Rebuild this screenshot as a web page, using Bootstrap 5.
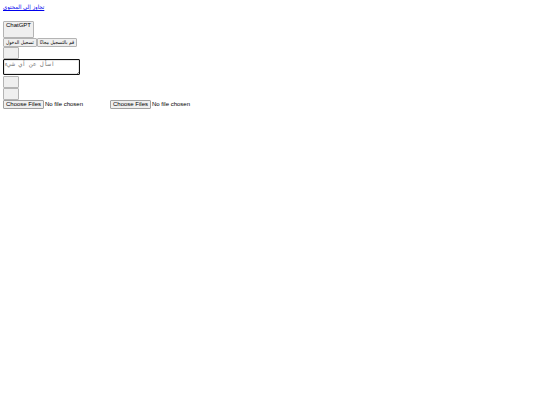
<!DOCTYPE html>
<html lang="ar" dir="ltr">
<head>
<meta charset="utf-8">
<meta name="viewport" content="width=device-width, initial-scale=1">
<title>ChatGPT</title>
<link href="https://cdn.jsdelivr.net/npm/bootstrap@5.3.0/dist/css/bootstrap.min.css" rel="stylesheet">
<style>
  body { font-family: "Liberation Sans", "DejaVu Sans", sans-serif; font-size: 6px; line-height: 7px; color: #000; background: #fff; padding: 3px; }
  .skip-link { color: #0000ee; font-family: "DejaVu Sans Condensed", "DejaVu Sans", sans-serif; line-height: 8px; margin-bottom: 10px; }
  .plain-btn { background: #efefef; color: #000; border: 1px solid #b4b4b4; border-radius: 1px; padding: 0 2px; font-size: 6px; line-height: 7px; }
  .auth-btn { font-family: "DejaVu Sans Condensed", "DejaVu Sans", sans-serif; font-size: 5px; }
  .model-btn { height: 17px; padding-bottom: 8px; }
  .icon-btn { width: 16px; height: 12px; }
  .prompt-box { width: 77px; height: 16px; margin-bottom: 1px; padding: 0; border: 1px solid #101010; box-shadow: inset 0 0 1px #101010; outline: none; border-radius: 1px; font-family: "DejaVu Sans Mono", monospace; font-size: 6px; line-height: 8px; resize: none; color: #000; background: linear-gradient(135deg, transparent 50%, #999 50%, #999 70%, transparent 70%) right bottom / 3px 3px no-repeat; }
  .prompt-box::placeholder { color: #757575; }
  .file-field { width: 107px; font-size: 6px; line-height: 7px; }
  .file-field::file-selector-button { background: #efefef; color: #000; border: 1px solid #a0a0a0; border-radius: 1px; padding: 0 2px; margin-right: 1px; font-size: 6px; line-height: 7px; }
</style>
</head>
<body>
<a class="skip-link d-block text-decoration-underline" href="#main">تجاوز إلى المحتوى</a>
<main id="main" class="d-flex flex-column align-items-start">
  <button type="button" class="plain-btn model-btn">ChatGPT</button>
  <div class="d-flex">
    <button type="button" class="plain-btn auth-btn">تسجيل الدخول</button>
    <button type="button" class="plain-btn auth-btn">قم بالتسجيل مجانًا</button>
  </div>
  <button type="button" class="plain-btn icon-btn" aria-label="إضافة"></button>
  <textarea class="prompt-box overflow-hidden" aria-label="اسأل عن أي شيء" placeholder="اسأل عن أي شيء"></textarea>
  <button type="button" class="plain-btn icon-btn" aria-label="بحث"></button>
  <button type="button" class="plain-btn icon-btn" aria-label="إرسال"></button>
  <div class="d-flex flex-wrap">
    <input type="file" class="file-field" multiple aria-label="ملفات">
    <input type="file" class="file-field" multiple aria-label="صور">
  </div>
</main>
<script src="https://cdn.jsdelivr.net/npm/bootstrap@5.3.0/dist/js/bootstrap.bundle.min.js"></script>
</body>
</html>
